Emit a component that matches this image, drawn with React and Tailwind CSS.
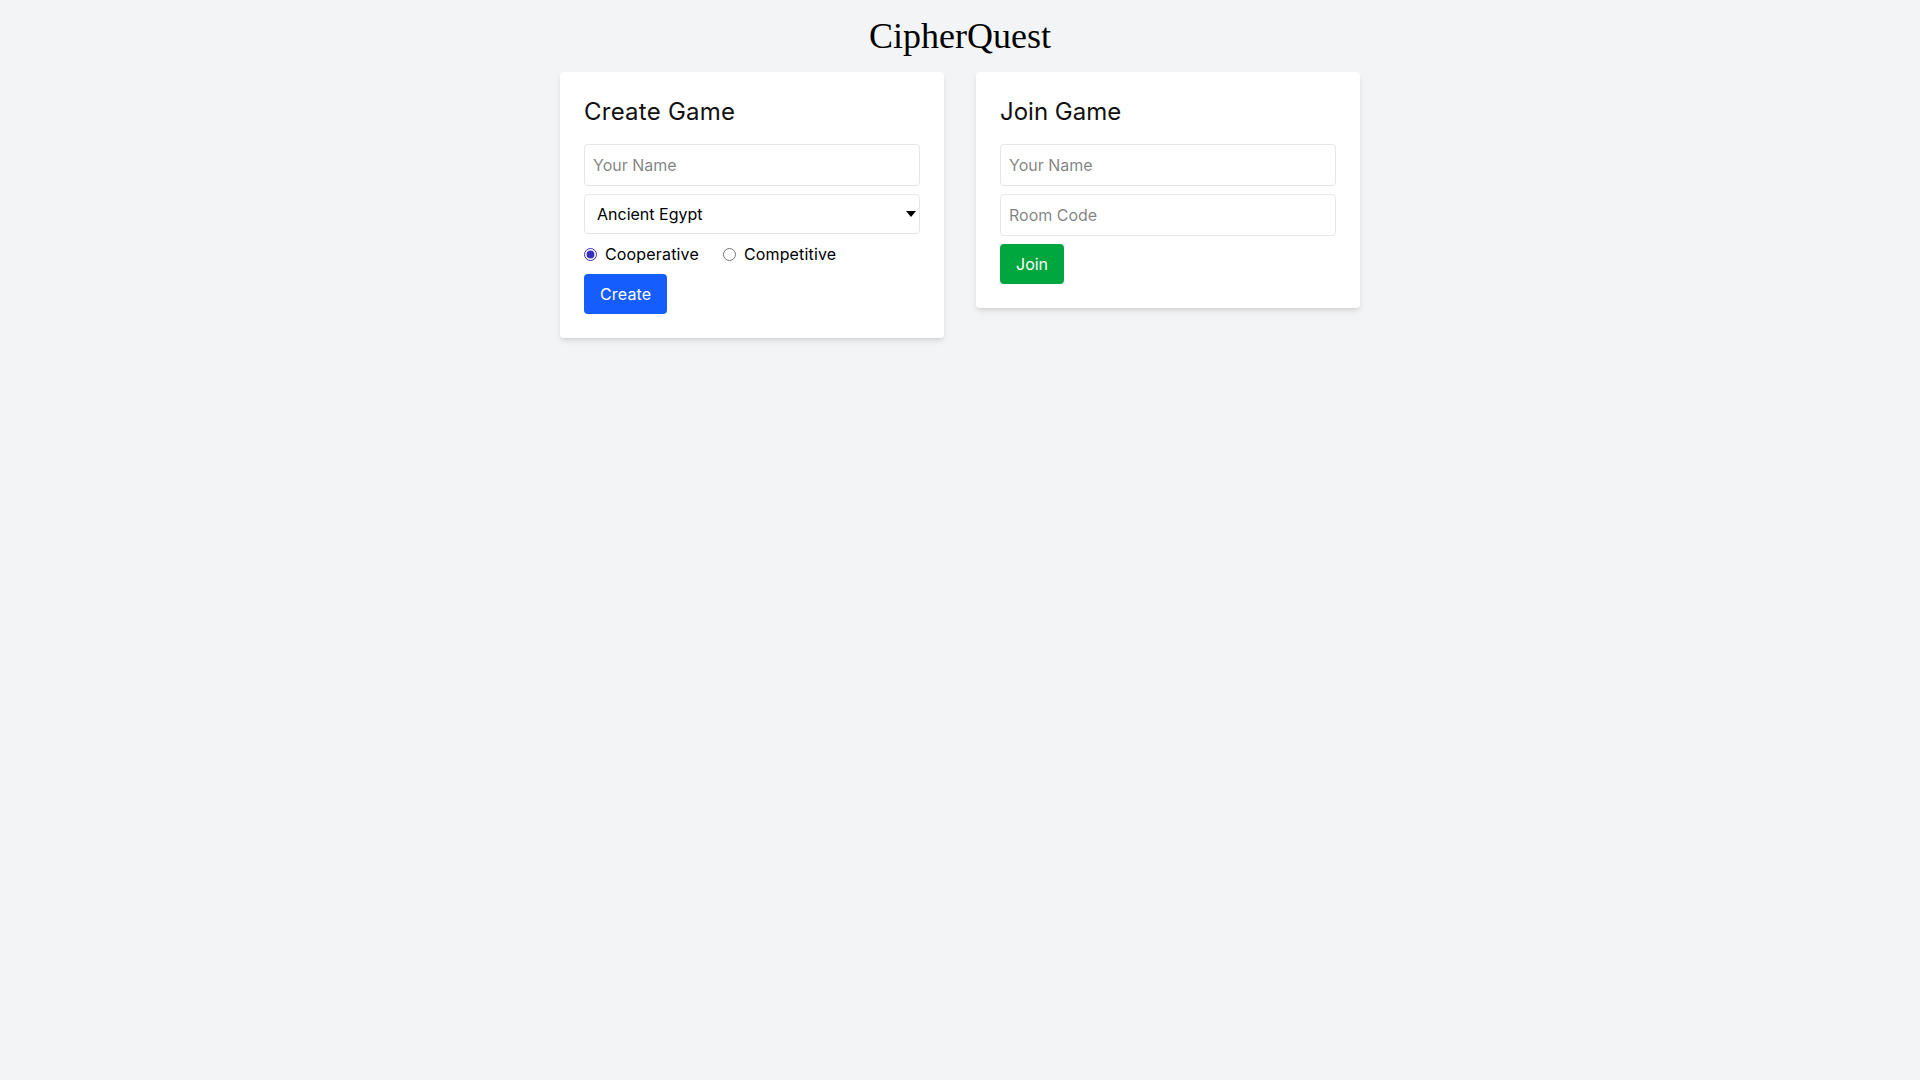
import { useState } from 'react';

const inputCls = "w-full p-2 border border-gray-200 rounded text-base text-black bg-white outline-none";

const CreateGame = () => {
    const [mode, setMode] = useState('coop');
    return (
        <div className="bg-white rounded shadow-md p-6">
            <h2 className="text-2xl mb-4 text-[#111] tracking-[0.01em]">Create Game</h2>
            <div className="flex flex-col gap-2">
                <input type="text" placeholder="Your Name" className={inputCls} />
                <div className="relative">
                    <select className="w-full h-10 pl-3 pr-8 border border-gray-200 rounded text-base text-black bg-white appearance-none" defaultValue="egypt">
                        <option value="egypt">Ancient Egypt</option>
                        <option value="rome">Ancient Rome</option>
                        <option value="greece">Ancient Greece</option>
                    </select>
                    <svg className="absolute right-[4px] top-1/2 -translate-y-1/2 pointer-events-none" width="10" height="6" viewBox="0 0 10 6">
                        <path d="M0 0h10L5 6z" fill="#000" />
                    </svg>
                </div>
                <div className="flex items-center gap-6 h-6 tracking-[0.01em]">
                    <label className="flex items-center gap-2">
                        <input type="radio" name="mode" checked={mode === 'coop'} onChange={() => setMode('coop')} className="accent-[#3730c0]" />
                        Cooperative
                    </label>
                    <label className="flex items-center gap-2">
                        <input type="radio" name="mode" checked={mode === 'comp'} onChange={() => setMode('comp')} className="accent-[#3730c0]" />
                        Competitive
                    </label>
                </div>
                <div>
                    <button className="px-4 py-2 rounded bg-blue-600 text-white tracking-[0.01em]">Create</button>
                </div>
            </div>
        </div>
    );
};

const JoinGame = () => (
    <div className="bg-white rounded shadow-md p-6">
        <h2 className="text-2xl mb-4 text-[#111]">Join Game</h2>
        <div className="flex flex-col gap-2">
            <input type="text" placeholder="Your Name" className={inputCls} />
            <input type="text" placeholder="Room Code" className={inputCls} />
            <div>
                <button className="px-4 py-2 rounded bg-green-600 text-white">Join</button>
            </div>
        </div>
    </div>
);

export default function App() {
    return (
        <div className="min-h-screen bg-gray-100 p-4 text-black font-['Inter',sans-serif]">
            <h1 className="text-4xl text-center mb-4 font-['Liberation_Serif',serif]">CipherQuest</h1>
            <div className="max-w-[800px] mx-auto grid grid-cols-2 gap-8 items-start">
                <CreateGame />
                <JoinGame />
            </div>
        </div>
    );
}
